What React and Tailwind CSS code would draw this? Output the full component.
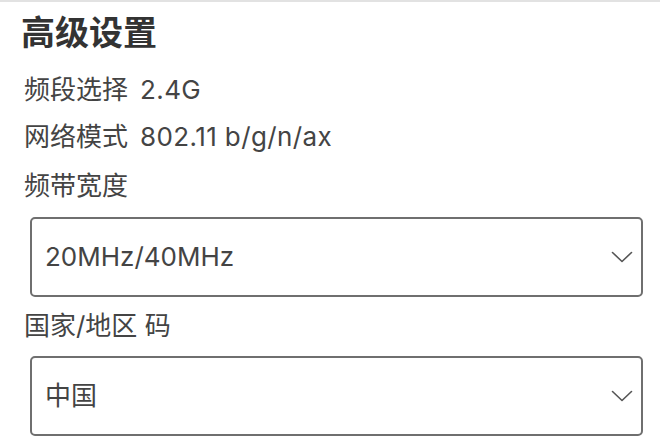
import React from "react";

const fontStack = {
  fontFamily: '"Inter", "Noto Sans CJK SC", "Noto Sans", sans-serif',
};

const Chevron = () => (
  <svg width="22" height="12" viewBox="0 0 22 12" fill="none">
    <path d="M1.5 1.5 L11 10.5 L20.5 1.5" stroke="#555" strokeWidth="1.6" strokeLinecap="round" strokeLinejoin="round" />
  </svg>
);

const SelectBox = ({ value, className = "" }) => (
  <div
    className={`ml-[30px] mr-[17px] h-[80px] border-2 border-[#6f6f6f] rounded-[5px] bg-white flex items-center justify-between pl-[13px] pr-[8px] ${className}`}
  >
    <span className="text-[26px] leading-[36px] text-[#444]">{value}</span>
    <Chevron />
  </div>
);

// label followed by a read-only value
const InfoRow = ({ label, value, className = "" }) => (
  <p className={`ml-[24px] text-[26px] leading-[36px] text-[#444] ${className}`}>
    {label}
    <span className="ml-[12px] tracking-[0.4px]">{value}</span>
  </p>
);

const App = () => {
  return (
    <div className="w-[660px] h-[441px] bg-white overflow-hidden border-t-2 border-[#e2e2e2]" style={fontStack}>
      <div className="flex flex-col">
        <h1 className="mt-[11px] ml-[21px] text-[34px] leading-[40px] font-bold text-[#333]">高级设置</h1>
        <InfoRow label="频段选择" value="2.4G" className="mt-[19px]" />
        <InfoRow label="网络模式" value="802.11 b/g/n/ax" className="mt-[11px]" />
        <p className="mt-[13px] ml-[24px] text-[26px] leading-[36px] text-[#444]">频带宽度</p>
        <SelectBox value="20MHz/40MHz" className="mt-[13px]" />
        <p className="mt-[11px] ml-[24px] text-[26px] leading-[36px] text-[#444]">国家/地区 码</p>
        <SelectBox value="中国" className="mt-[12px]" />
      </div>
    </div>
  );
};

export default App;
